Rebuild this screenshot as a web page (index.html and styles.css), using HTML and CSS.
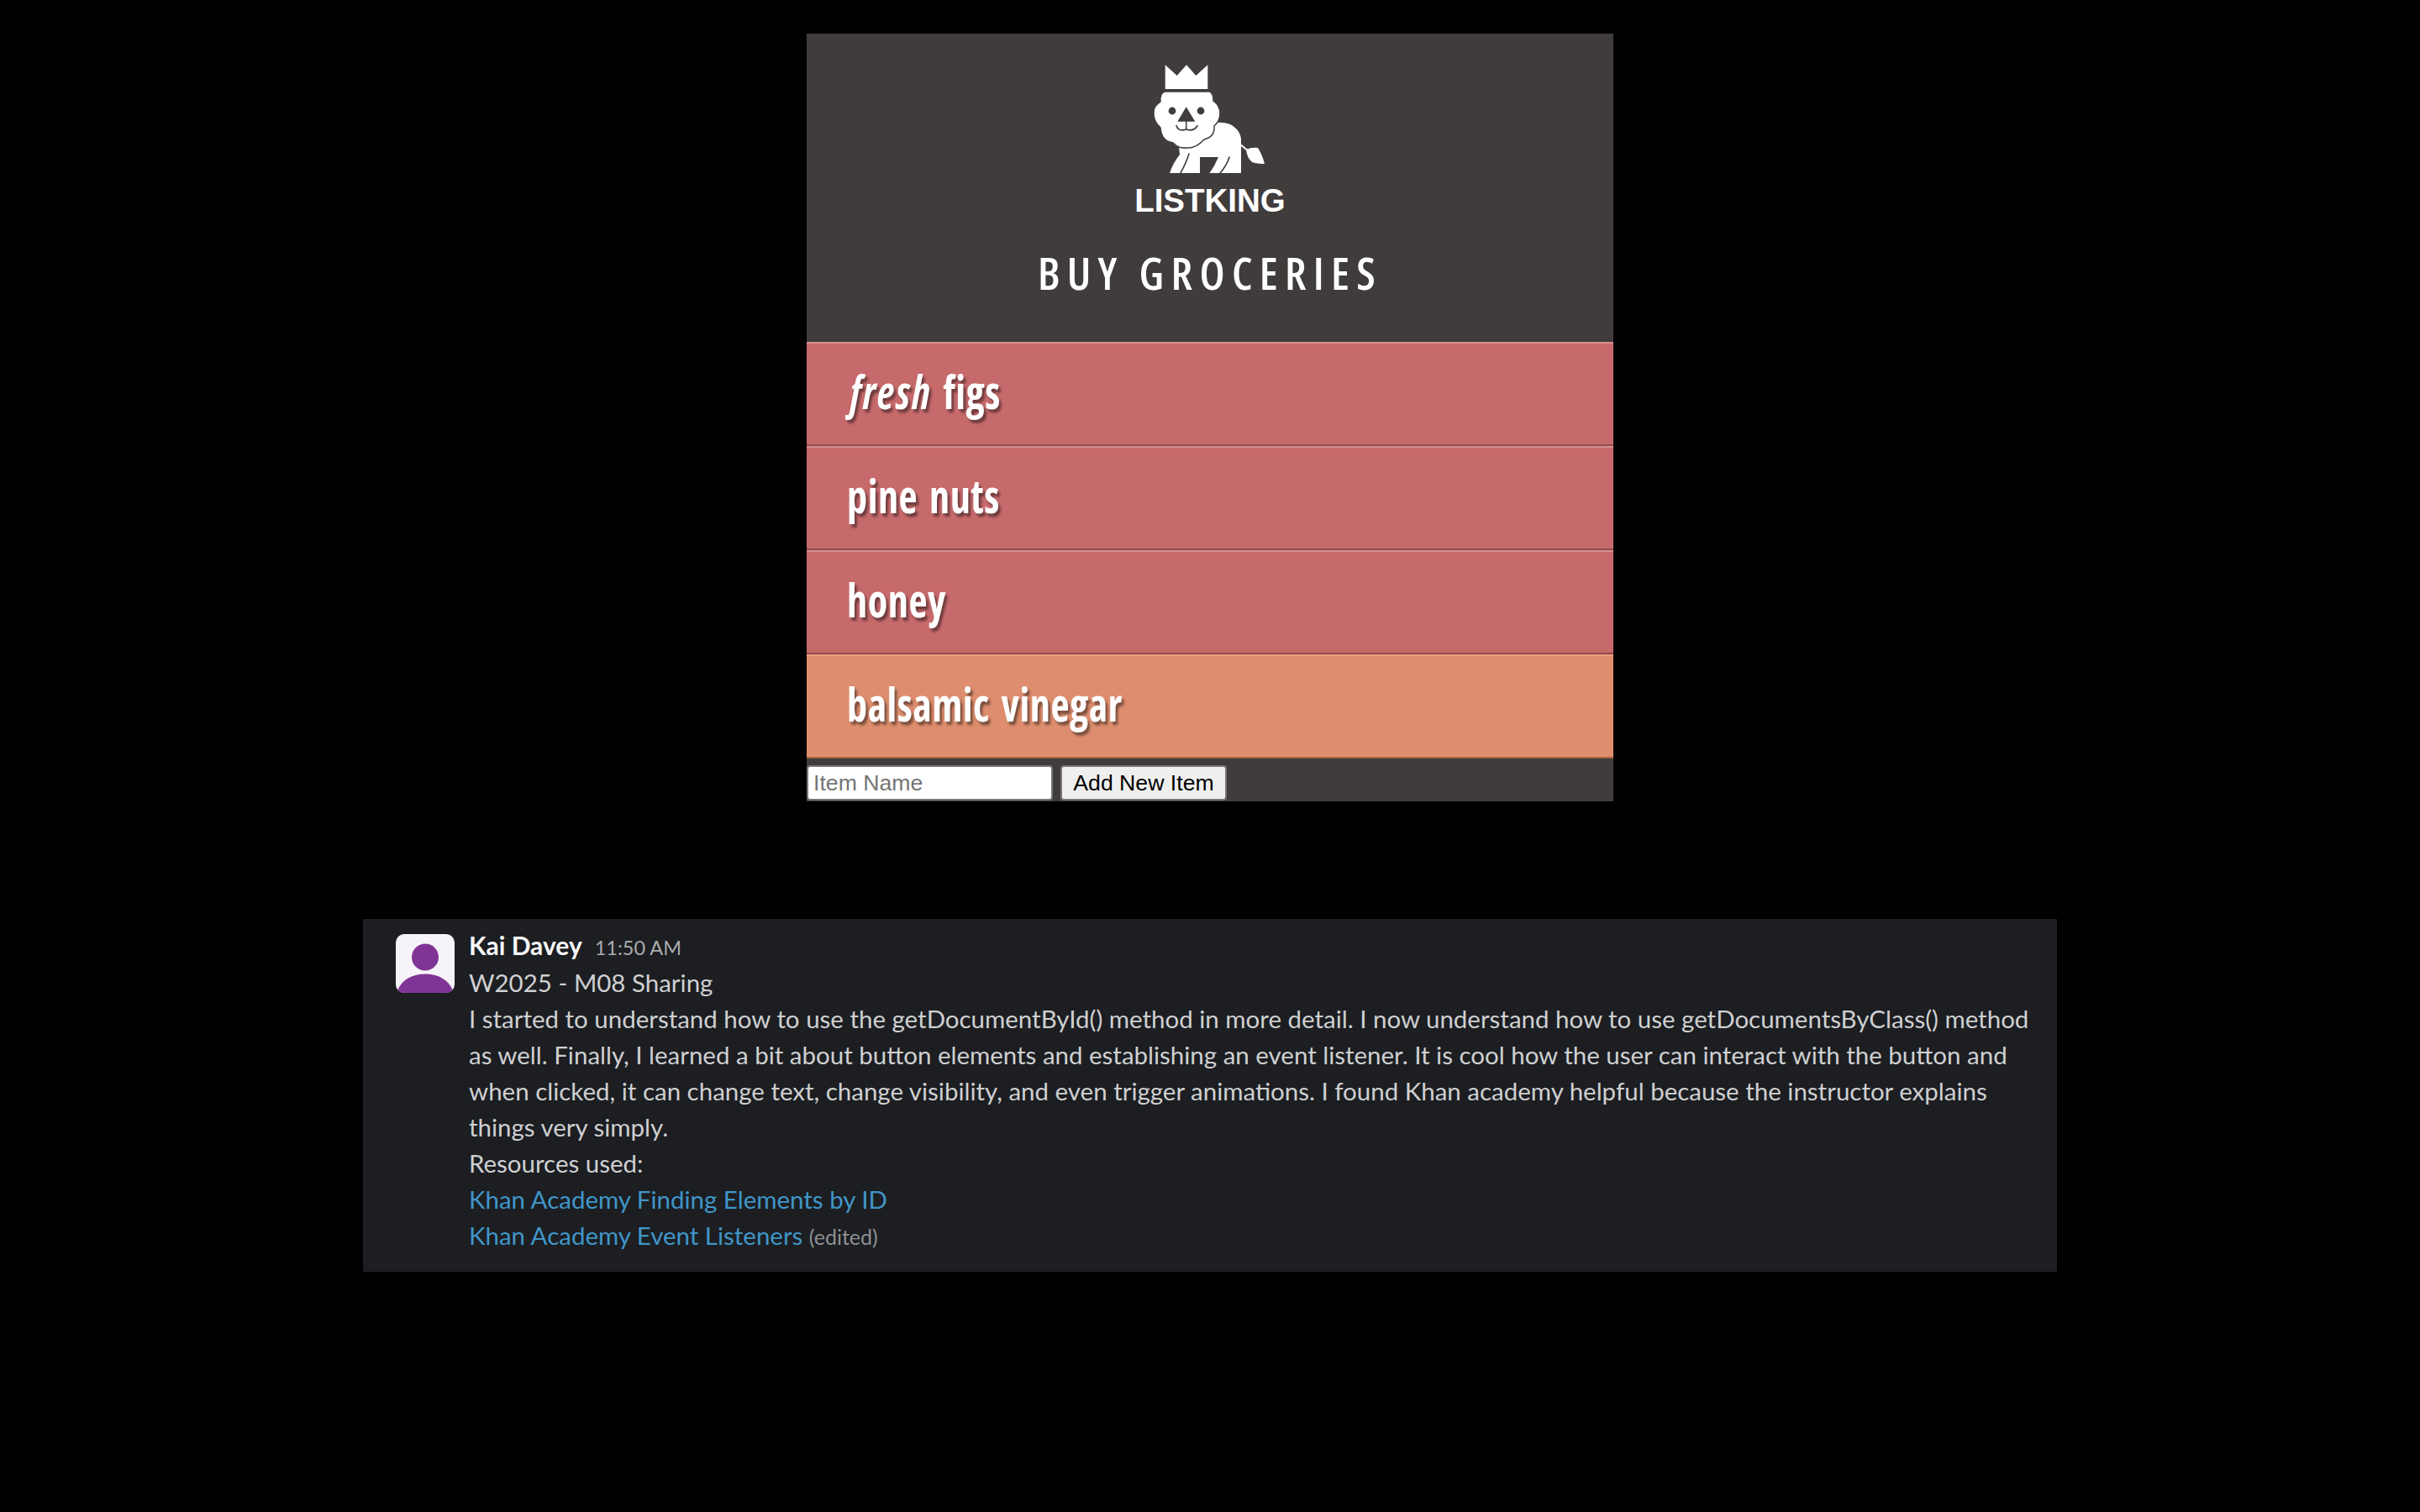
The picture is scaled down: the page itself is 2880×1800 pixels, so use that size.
FILE: index.html
```html
<!DOCTYPE html>
<html lang="en">
<head>
<meta charset="utf-8">
<title>ListKing</title>
<link rel="stylesheet" href="styles.css">
</head>
<body>
<main class="card">
  <header class="head">
    <svg class="lion" viewBox="0 0 220 160" aria-hidden="true">
      <path class="w" d="M56.7 17.3 70.7 30 82 17.3 93.3 30 107.3 17.3V46H56.7Z"/>
      <path class="w" d="M115 86Q134 84 142 94Q147 100 147 107V146H109.5Q116 137 120 127H98V146H62Q66 134 74 124L72 105Z"/>
      <path class="s" d="M85 123Q82 133 75 146M133 127Q130 137 122 146"/>
      <path class="tail" d="M146 112 156 120"/>
      <path class="w" d="M153 118Q160 115 167 116Q172 124 175 135Q166 135 160 133Q154 128 153 118Z"/>
      <path class="w mane" d="M56 49H109Q114 50 114 60Q122 66 122 75Q122 84 115 90Q116 103 103 106Q93 117 82 116Q72 117 66 110Q52 108 51 92Q42 84 43 73Q43 66 51 61Q50 51 56 49Z"/>
      <circle class="d" cx="65" cy="72" r="4.4"/>
      <circle class="d" cx="99" cy="72" r="4.4"/>
      <path class="d" d="M81.7 67.3 92.3 84.7H71.3Z"/>
      <path class="s" d="M70 89.5Q72 97 81.7 94Q91 97 95 89.5M81.7 84V94"/>
    </svg>
    <div class="brand">LISTKING</div>
    <h1 class="title">BUY GROCERIES</h1>
  </header>
  <ul class="items">
    <li class="item"><span class="label"><em class="fresh">fresh</em> figs</span></li>
    <li class="item"><span class="label">pine nuts</span></li>
    <li class="item"><span class="label">honey</span></li>
    <li class="item item-new"><span class="label">balsamic vinegar</span></li>
  </ul>
  <form class="add">
    <input class="field" type="text" placeholder="Item Name">
    <button class="btn" type="button">Add New Item</button>
  </form>
</main>
<section class="msg">
  <svg class="avatar" viewBox="0 0 70 70" aria-hidden="true">
    <rect class="av-bg" width="70" height="70" rx="10"/>
    <circle class="av-fg" cx="35" cy="27.500" r="16"/>
    <path class="av-fg" d="M2.500 66C8 54 20 47.500 35 47.500S62 54 67.500 66Q65 70 60 70H10Q5 70 2.500 66Z"/>
  </svg>
  <div class="body">
    <div class="meta"><strong class="name">Kai Davey</strong><span class="time">11:50 AM</span></div>
    <p class="line">W2025 - M08 Sharing</p>
    <p class="line">I started to understand how to use the getDocumentById() method in more detail. I now understand how to use getDocumentsByClass() method as well. Finally, I learned a bit about button elements and establishing an event listener. It is cool how the user can interact with the button and when clicked, it can change text, change visibility, and even trigger animations. I found Khan academy helpful because the instructor explains things very simply.</p>
    <p class="line">Resources used:</p>
    <p class="line"><a class="link" href="#">Khan Academy Finding Elements by ID</a></p>
    <p class="line"><a class="link" href="#">Khan Academy Event Listeners</a> <span class="edited">(edited)</span></p>
  </div>
</section>
</body>
</html>
```
FILE: styles.css
```css
* { box-sizing: border-box; }
html, body { margin: 0; background: #000; }
body { height: 1800px; overflow: hidden; }

.card { width: 960px; margin: 40px auto 0; background: #403c3b; }
.head { height: 367px; display: flex; flex-direction: column; align-items: center; }
.lion { width: 220px; height: 160px; margin-top: 20px; flex: none; }
.w { fill: #fff; }
.d { fill: #403c3b; }
.mane { stroke: #403c3b; stroke-width: 1.500; }
.s { fill: none; stroke: #403c3b; stroke-width: 1.600; stroke-linecap: round; }
.tail { fill: none; stroke: #fff; stroke-width: 2; }
.brand { font: 700 38.500px/1 "Liberation Sans", Arial, sans-serif; color: #fff; }
.title { margin: 34px 0 0; font-family: "Open Sans", sans-serif; font-weight: 600; font-size: 53px; line-height: 64px; font-stretch: 75%; letter-spacing: 8.300px; color: #fff; white-space: nowrap; }

.items { list-style: none; margin: 0; padding: 0; }
.item { height: 124px; padding: 0 0 7px 48px; display: flex; align-items: center; background: #c76a6c; border-top: 2px solid #d98f90; border-bottom: 2px solid #8f4d4e; color: #fff; font-family: "Open Sans", sans-serif; font-weight: 700; font-size: 52px; line-height: 1; font-stretch: 75%; word-spacing: 5px; letter-spacing: .5px; text-shadow: 3px 3px 3px rgba(0,0,0,.45); }
.label { transform: scale(.93, 1.07); transform-origin: left center; }
.item-new { background: #de8e6e; border-top-color: #ee9e7e; border-bottom-color: #a9603f; }
.fresh { font-style: italic; letter-spacing: 2px; margin-left: 4px; }

.add { height: 51px; padding-top: 8px; display: flex; gap: 9px; }
.field { width: 293px; height: 42px; padding: 2px 6px; border: 2px solid #767676; border-radius: 4px; background: #fff; font: 26.670px "Liberation Sans", Arial, sans-serif; color: #000; }
.field::placeholder { color: #757575; opacity: 1; }
.btn { width: 198px; height: 42px; padding: 0; border: 2px solid #767676; border-radius: 4px; background: #efefef; font: 26.670px "Liberation Sans", Arial, sans-serif; color: #000; }

.msg { width: 2016px; height: 420px; margin: 140px auto 0; padding: 18px 24px 0 39px; background: #1c1e22; display: flex; gap: 17px; font: 400 29.470px/43px Lato, sans-serif; color: #cfd0d1; }
.avatar { width: 70px; height: 70px; flex: none; }
.av-bg { fill: #f6f4f9; }
.av-fg { fill: #803596; }
.body { flex: 1; min-width: 0; margin-top: -8px; }
.meta { display: flex; align-items: baseline; gap: 15px; height: 44px; }
.name { font-weight: 700; font-size: 30px; color: #f8f8f8; }
.time { font-size: 23.500px; color: #ababad; }
.line { margin: 0; }
.link { color: #4096c8; text-decoration: none; }
.edited { font-size: 25px; color: #8f9093; }
```
